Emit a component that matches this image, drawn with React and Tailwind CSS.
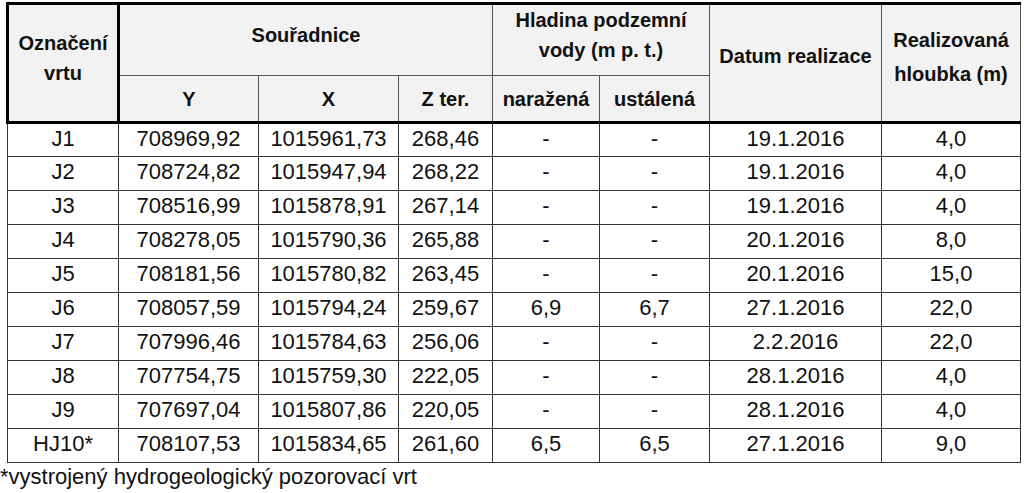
import React from "react";

const rows = [
  ["J1", "708969,92", "1015961,73", "268,46", "-", "-", "19.1.2016", "4,0"],
  ["J2", "708724,82", "1015947,94", "268,22", "-", "-", "19.1.2016", "4,0"],
  ["J3", "708516,99", "1015878,91", "267,14", "-", "-", "19.1.2016", "4,0"],
  ["J4", "708278,05", "1015790,36", "265,88", "-", "-", "20.1.2016", "8,0"],
  ["J5", "708181,56", "1015780,82", "263,45", "-", "-", "20.1.2016", "15,0"],
  ["J6", "708057,59", "1015794,24", "259,67", "6,9", "6,7", "27.1.2016", "22,0"],
  ["J7", "707996,46", "1015784,63", "256,06", "-", "-", "2.2.2016", "22,0"],
  ["J8", "707754,75", "1015759,30", "222,05", "-", "-", "28.1.2016", "4,0"],
  ["J9", "707697,04", "1015807,86", "220,05", "-", "-", "28.1.2016", "4,0"],
  ["HJ10*", "708107,53", "1015834,65", "261,60", "6,5", "6,5", "27.1.2016", "9,0"],
];

export default function App() {
  const th = "border border-[#555] bg-[#f2f2f2] font-bold text-[20px] leading-[30px] text-[#111] text-center align-middle p-0";
  const td = "border border-[#333] text-[22px] leading-[26px] text-[#111] text-center align-middle p-0 pb-[3px] h-[34px]";
  return (
    <div className="w-[1024px] h-[493px] bg-white overflow-hidden" style={{ fontFamily: '"Liberation Sans", Arial, sans-serif' }}>
      <div className="pt-[2px] pl-[6px]">
        <table className="table-fixed border-collapse w-[1013px]">
          <colgroup>
            <col className="w-[111px]" />
            <col className="w-[140px]" />
            <col className="w-[140px]" />
            <col className="w-[94px]" />
            <col className="w-[107px]" />
            <col className="w-[110px]" />
            <col className="w-[172px]" />
            <col className="w-[139px]" />
          </colgroup>
          <thead>
            <tr className="h-[70px]">
              <th rowSpan={2} className={`${th} border-t-[3px] border-t-black border-l-[3px] border-l-black border-r-[3px] border-r-black border-b-[3px] border-b-black pb-[10px]`}>
                Označení<br />vrtu
              </th>
              <th colSpan={3} className={`${th} border-t-[3px] border-t-black pb-[10px]`}>Souřadnice</th>
              <th colSpan={2} className={`${th} border-t-[3px] border-t-black pb-[10px]`}>
                Hladina podzemní<br />vody (m p. t.)
              </th>
              <th rowSpan={2} className={`${th} border-t-[3px] border-t-black border-b-[3px] border-b-black pb-[14px]`}>Datum realizace</th>
              <th rowSpan={2} className={`${th} border-t-[3px] border-t-black border-b-[3px] border-b-black leading-[34px] pb-[12px]`}>
                Realizovaná<br />hloubka (m)
              </th>
            </tr>
            <tr className="h-[47px]">
              <th className={`${th} border-b-[3px] border-b-black`}>Y</th>
              <th className={`${th} border-b-[3px] border-b-black`}>X</th>
              <th className={`${th} border-b-[3px] border-b-black`}>Z ter.</th>
              <th className={`${th} border-b-[3px] border-b-black`}>naražená</th>
              <th className={`${th} border-b-[3px] border-b-black`}>ustálená</th>
            </tr>
          </thead>
          <tbody>
            {rows.map((r) => (
              <tr key={r[0]}>
                {r.map((c, i) => (
                  <td key={i} className={td}>{c}</td>
                ))}
              </tr>
            ))}
          </tbody>
        </table>
      </div>
      <div className="text-[22px] leading-[26px] text-[#111] mt-[1px]">*vystrojený hydrogeologický pozorovací vrt</div>
    </div>
  );
}
